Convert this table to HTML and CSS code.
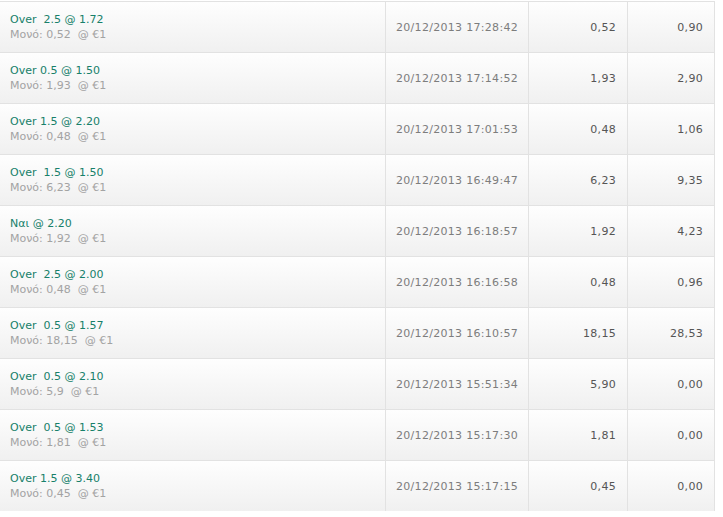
FILE: index.html
```html
<!DOCTYPE html>
<html lang="el">
<head>
  <meta charset="UTF-8" />
  <title>Ιστορικό στοιχημάτων</title>
  <link rel="stylesheet" href="styles.css">
</head>
<body>
  <div class="bets">
    <div class="row">
      <div class="cell sel"><span class="pick">Over&nbsp; 2.5 @ 1.72</span><span class="stake">Μονό: 0,52&nbsp; @ €1</span></div>
      <div class="cell date">20/12/2013 17:28:42</div>
      <div class="cell num">0,52</div>
      <div class="cell num">0,90</div>
    </div>
    <div class="row">
      <div class="cell sel"><span class="pick">Over 0.5 @ 1.50</span><span class="stake">Μονό: 1,93&nbsp; @ €1</span></div>
      <div class="cell date">20/12/2013 17:14:52</div>
      <div class="cell num">1,93</div>
      <div class="cell num">2,90</div>
    </div>
    <div class="row">
      <div class="cell sel"><span class="pick">Over 1.5 @ 2.20</span><span class="stake">Μονό: 0,48&nbsp; @ €1</span></div>
      <div class="cell date">20/12/2013 17:01:53</div>
      <div class="cell num">0,48</div>
      <div class="cell num">1,06</div>
    </div>
    <div class="row">
      <div class="cell sel"><span class="pick">Over&nbsp; 1.5 @ 1.50</span><span class="stake">Μονό: 6,23&nbsp; @ €1</span></div>
      <div class="cell date">20/12/2013 16:49:47</div>
      <div class="cell num">6,23</div>
      <div class="cell num">9,35</div>
    </div>
    <div class="row">
      <div class="cell sel"><span class="pick">Ναι @ 2.20</span><span class="stake">Μονό: 1,92&nbsp; @ €1</span></div>
      <div class="cell date">20/12/2013 16:18:57</div>
      <div class="cell num">1,92</div>
      <div class="cell num">4,23</div>
    </div>
    <div class="row">
      <div class="cell sel"><span class="pick">Over&nbsp; 2.5 @ 2.00</span><span class="stake">Μονό: 0,48&nbsp; @ €1</span></div>
      <div class="cell date">20/12/2013 16:16:58</div>
      <div class="cell num">0,48</div>
      <div class="cell num">0,96</div>
    </div>
    <div class="row">
      <div class="cell sel"><span class="pick">Over&nbsp; 0.5 @ 1.57</span><span class="stake">Μονό: 18,15&nbsp; @ €1</span></div>
      <div class="cell date">20/12/2013 16:10:57</div>
      <div class="cell num">18,15</div>
      <div class="cell num">28,53</div>
    </div>
    <div class="row">
      <div class="cell sel"><span class="pick">Over&nbsp; 0.5 @ 2.10</span><span class="stake">Μονό: 5,9&nbsp; @ €1</span></div>
      <div class="cell date">20/12/2013 15:51:34</div>
      <div class="cell num">5,90</div>
      <div class="cell num">0,00</div>
    </div>
    <div class="row">
      <div class="cell sel"><span class="pick">Over&nbsp; 0.5 @ 1.53</span><span class="stake">Μονό: 1,81&nbsp; @ €1</span></div>
      <div class="cell date">20/12/2013 15:17:30</div>
      <div class="cell num">1,81</div>
      <div class="cell num">0,00</div>
    </div>
    <div class="row">
      <div class="cell sel"><span class="pick">Over 1.5 @ 3.40</span><span class="stake">Μονό: 0,45&nbsp; @ €1</span></div>
      <div class="cell date">20/12/2013 15:17:15</div>
      <div class="cell num">0,45</div>
      <div class="cell num">0,00</div>
    </div>
  </div>
</body>
</html>
```

FILE: styles.css
```css
body {
  margin: 0;
  padding-top: 1px;
  background: #fff;
  font-family: "DejaVu Sans", Verdana, sans-serif;
  font-size: 11px;
  letter-spacing: 0.3px;
}

.bets {
  width: 715px;
}

.row {
  display: grid;
  grid-template-columns: 386px 143px 99px 87px;
  height: 51px;
  box-sizing: border-box;
  border-top: 1px solid #e2e2e2;
  background: linear-gradient(#fefefe, #f0f0f0);
}

.cell {
  box-sizing: border-box;
  border-right: 1px solid #e2e2e2;
  display: flex;
  align-items: center;
  padding: 0 10px;
}

.sel {
  flex-direction: column;
  align-items: flex-start;
  justify-content: center;
  line-height: 15px;
  letter-spacing: 0;
}

.pick {
  color: #17806a;
}

.stake {
  color: #a3a3a3;
}

.date {
  color: #7d7d7d;
}

.num {
  justify-content: flex-end;
  padding-right: 11px;
  color: #555;
}
```
